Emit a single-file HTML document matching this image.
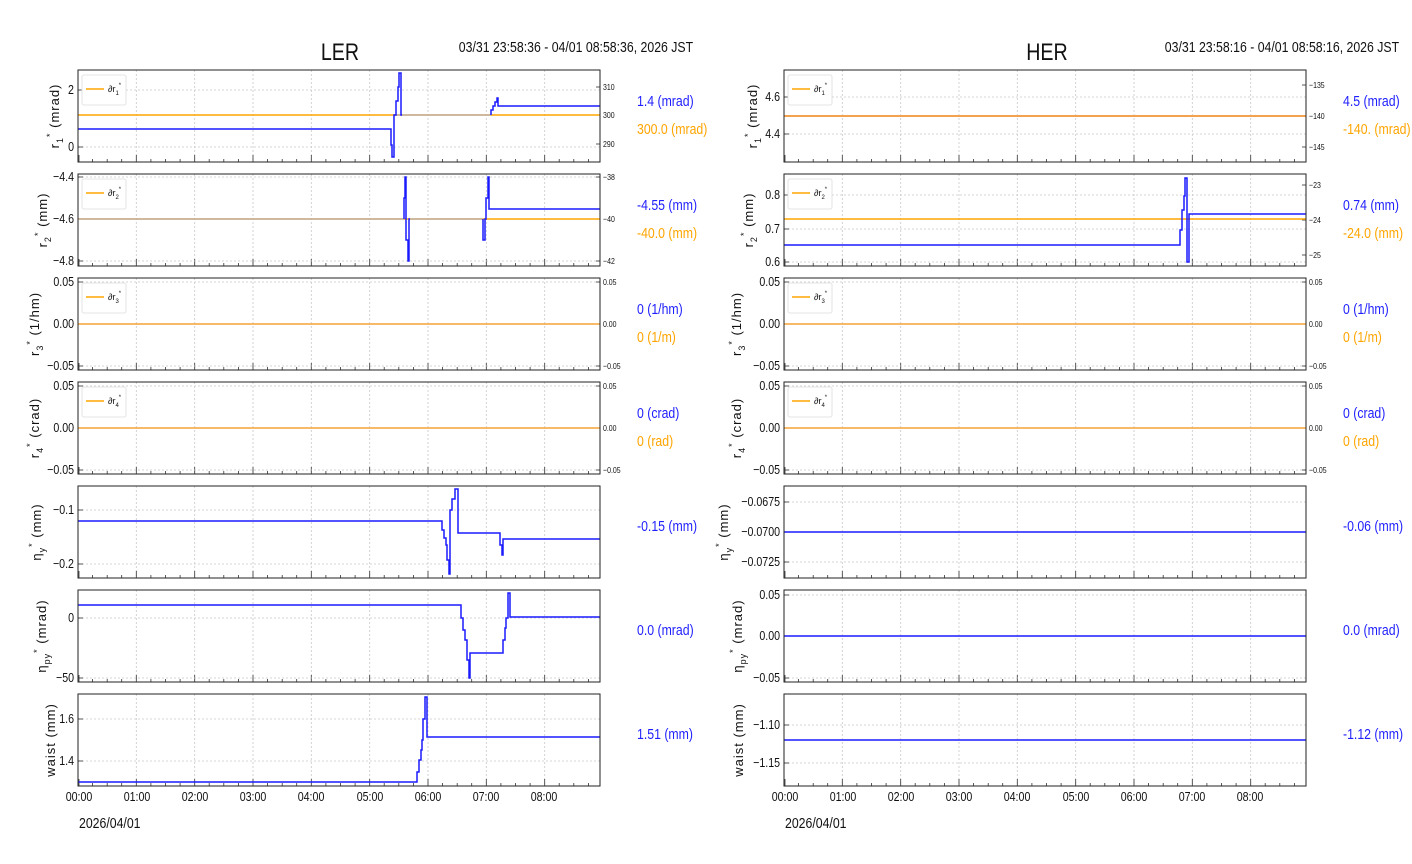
<!DOCTYPE html>
<html><head><meta charset="utf-8"><style>
html,body{margin:0;padding:0;background:#fff;width:1412px;height:864px;overflow:hidden}
svg{display:block}
text{font-family:"Liberation Sans",sans-serif;fill:#111}
.tk{font-size:13px}
.rtk{font-size:8.5px}
.yl{font-family:"DejaVu Sans","Liberation Sans",sans-serif;font-size:13px;letter-spacing:1px}
.vb{fill:#1f1fff;font-size:15px}
.vo{fill:#ffa500;font-size:15px}
.lg{font-size:9px;fill:#333}
.n text{transform:scaleX(.82);transform-box:fill-box;transform-origin:left center}
.ne text,text.ne{transform:scaleX(.82);transform-box:fill-box;transform-origin:right center}
.nm text,text.nm{transform:scaleX(.82);transform-box:fill-box;transform-origin:center center}
</style></head><body>
<svg width="1412" height="864" viewBox="0 0 1412 864" xmlns="http://www.w3.org/2000/svg">
<defs>
<g id="vg">
<path d="M58.3 0v92M116.7 0v92M175 0v92M233.3 0v92M291.7 0v92M350 0v92M408.3 0v92M466.7 0v92" stroke="#c8c8c8" stroke-width="0.8" stroke-dasharray="2,2" fill="none"/>
<path d="M14.6 92v-3M29.2 92v-3M43.7 92v-3M72.9 92v-3M87.5 92v-3M102.1 92v-3M131.2 92v-3M145.8 92v-3M160.4 92v-3M189.6 92v-3M204.2 92v-3M218.7 92v-3M247.9 92v-3M262.5 92v-3M277.1 92v-3M306.2 92v-3M320.8 92v-3M335.4 92v-3M364.6 92v-3M379.2 92v-3M393.7 92v-3M422.9 92v-3M437.5 92v-3M452.1 92v-3M481.2 92v-3M495.8 92v-3M510.4 92v-3M1 92v-7M58.3 92v-7M116.7 92v-7M175 92v-7M233.3 92v-7M291.7 92v-7M350 92v-7M408.3 92v-7M466.7 92v-7" stroke="#333" stroke-width="0.8" fill="none"/>
</g>
<g id="fr"><rect x="0" y="0" width="522" height="92" fill="none" stroke="#222" stroke-width="1"/></g>
</defs>

<text x="340" y="60" text-anchor="middle" class="nm" style="font-size:24px">LER</text>
<text x="693" y="52" text-anchor="end" class="ne" style="font-size:15px">03/31 23:58:36 - 04/01 08:58:36, 2026 JST</text>
<text x="1047" y="60" text-anchor="middle" class="nm" style="font-size:24px">HER</text>
<text x="1399" y="52" text-anchor="end" class="ne" style="font-size:15px">03/31 23:58:16 - 04/01 08:58:16, 2026 JST</text>

<g>
<use href="#vg" x="78" y="70"/><use href="#vg" x="78" y="174"/><use href="#vg" x="78" y="278"/><use href="#vg" x="78" y="382"/><use href="#vg" x="78" y="486"/><use href="#vg" x="78" y="590"/><use href="#vg" x="78" y="694"/>
<use href="#vg" x="784" y="70"/><use href="#vg" x="784" y="174"/><use href="#vg" x="784" y="278"/><use href="#vg" x="784" y="382"/><use href="#vg" x="784" y="486"/><use href="#vg" x="784" y="590"/><use href="#vg" x="784" y="694"/>
</g>

<g stroke="#c8c8c8" stroke-width="0.8" stroke-dasharray="2,2">
<path d="M78 90H600M78 147H600M78 177H600M78 219H600M78 261H600M78 282H600M78 366H600M78 386H600M78 470H600M78 510H600M78 564H600M78 618H600M78 678H600M78 719H600M78 761H600"/>
<path d="M784 97H1306M784 134H1306M784 195H1306M784 229H1306M784 262H1306M784 282H1306M784 324H1306M784 366H1306M784 386H1306M784 428H1306M784 470H1306M784 502H1306M784 532H1306M784 562H1306M784 595H1306M784 636H1306M784 678H1306M784 725H1306M784 763H1306"/>
</g>

<g stroke="#222" stroke-width="0.8">
<path d="M78 90h5M78 147h5M78 177h5M78 219h5M78 261h5M78 282h5M78 324h5M78 366h5M78 386h5M78 428h5M78 470h5M78 510h5M78 564h5M78 618h5M78 678h5M78 719h5M78 761h5"/>
<path d="M600 87h-4M600 115h-4M600 144h-4M600 177h-4M600 219h-4M600 261h-4M600 282h-4M600 324h-4M600 366h-4M600 386h-4M600 428h-4M600 470h-4"/>
<path d="M784 97h5M784 134h5M784 195h5M784 229h5M784 262h5M784 282h5M784 324h5M784 366h5M784 386h5M784 428h5M784 470h5M784 502h5M784 532h5M784 562h5M784 595h5M784 636h5M784 678h5M784 725h5M784 763h5"/>
<path d="M1306 85h-4M1306 116h-4M1306 147h-4M1306 185h-4M1306 220h-4M1306 255h-4M1306 282h-4M1306 324h-4M1306 366h-4M1306 386h-4M1306 428h-4M1306 470h-4"/>
</g>

<g fill="none" stroke-width="1.5">
<path d="M78 115H600" stroke="#ffa500"/>
<path d="M396 115H491" stroke="#bdb0a8"/>
<path d="M78 129H391V145H392V157H394V115H396V101H398V87H399V73H401V115H402M491 115V110H493V106H495V102H497V98H498V106H600" stroke="#1a1aff"/>

<path d="M78 219H600" stroke="#ffa500"/>
<path d="M78 219H404M410 219H483" stroke="#bdb0a8"/>
<path d="M404 219V198H405V177H406V240H408V261H409V219H410M483 219V240H485V219H486V198H488V177H489V209H600" stroke="#1a1aff"/>

<path d="M78 324H600" stroke="#e8a0a0"/>
<path d="M78 324H600" stroke="#ffa500" stroke-width="1"/>
<path d="M78 428H600" stroke="#e8a0a0"/>
<path d="M78 428H600" stroke="#ffa500" stroke-width="1"/>

<path d="M78 521H442V530H444V538H446V545H447V560H449V574H450V510H452V499H455V489H458V533H500V545H502V555H503V539H600" stroke="#1a1aff"/>
<path d="M78 605H461V618H463V630H465V640H467V660H469V678H470V653H503V640H505V628H506V618H508V593H510V617H600" stroke="#1a1aff"/>
<path d="M78 782H417V772H419V760H421V750H422V740H423V719H425V697H427V737H600" stroke="#1a1aff"/>

<path d="M784 116H1306" stroke="#e8a0a0" stroke-width="2"/>
<path d="M784 116H1306" stroke="#ffa500" stroke-width="1"/>
<path d="M784 219H1306" stroke="#ffa500"/>
<path d="M784 245H1180V230H1182V210H1184V196H1185V178H1187V262H1189V214H1306" stroke="#1a1aff"/>
<path d="M784 324H1306" stroke="#e8a0a0"/>
<path d="M784 324H1306" stroke="#ffa500" stroke-width="1"/>
<path d="M784 428H1306" stroke="#e8a0a0"/>
<path d="M784 428H1306" stroke="#ffa500" stroke-width="1"/>
<path d="M784 532H1306M784 636H1306M784 740H1306" stroke="#1a1aff"/>
</g>

<use href="#fr" x="78" y="70"/><use href="#fr" x="78" y="174"/><use href="#fr" x="78" y="278"/><use href="#fr" x="78" y="382"/><use href="#fr" x="78" y="486"/><use href="#fr" x="78" y="590"/><use href="#fr" x="78" y="694"/>
<use href="#fr" x="784" y="70"/><use href="#fr" x="784" y="174"/><use href="#fr" x="784" y="278"/><use href="#fr" x="784" y="382"/><use href="#fr" x="784" y="486"/><use href="#fr" x="784" y="590"/><use href="#fr" x="784" y="694"/>

<g fill="#fff" stroke="#ddd" stroke-width="0.8">
<rect x="82" y="75" width="44" height="30" rx="2"/><rect x="82" y="179" width="44" height="30" rx="2"/><rect x="82" y="283" width="44" height="30" rx="2"/><rect x="82" y="387" width="44" height="30" rx="2"/>
<rect x="788" y="75" width="44" height="30" rx="2"/><rect x="788" y="179" width="44" height="30" rx="2"/><rect x="788" y="283" width="44" height="30" rx="2"/><rect x="788" y="387" width="44" height="30" rx="2"/>
</g>
<g stroke="#ffa500" stroke-width="1.5">
<path d="M86 89h18M86 193h18M86 297h18M86 401h18M792 89h18M792 193h18M792 297h18M792 401h18"/>
</g>
<g class="lg">
<text x="108" y="92">∂r<tspan dy="3" font-size="6">1</tspan><tspan dy="-8" font-size="6">*</tspan></text>
<text x="108" y="196">∂r<tspan dy="3" font-size="6">2</tspan><tspan dy="-8" font-size="6">*</tspan></text>
<text x="108" y="300">∂r<tspan dy="3" font-size="6">3</tspan><tspan dy="-8" font-size="6">*</tspan></text>
<text x="108" y="404">∂r<tspan dy="3" font-size="6">4</tspan><tspan dy="-8" font-size="6">*</tspan></text>
<text x="814" y="92">∂r<tspan dy="3" font-size="6">1</tspan><tspan dy="-8" font-size="6">*</tspan></text>
<text x="814" y="196">∂r<tspan dy="3" font-size="6">2</tspan><tspan dy="-8" font-size="6">*</tspan></text>
<text x="814" y="300">∂r<tspan dy="3" font-size="6">3</tspan><tspan dy="-8" font-size="6">*</tspan></text>
<text x="814" y="404">∂r<tspan dy="3" font-size="6">4</tspan><tspan dy="-8" font-size="6">*</tspan></text>
</g>

<g class="tk ne" text-anchor="end">
<text x="74" y="94">2</text><text x="74" y="151">0</text>
<text x="74" y="181">−4.4</text><text x="74" y="223">−4.6</text><text x="74" y="265">−4.8</text>
<text x="74" y="286">0.05</text><text x="74" y="328">0.00</text><text x="74" y="370">−0.05</text>
<text x="74" y="390">0.05</text><text x="74" y="432">0.00</text><text x="74" y="474">−0.05</text>
<text x="74" y="514">−0.1</text><text x="74" y="568">−0.2</text>
<text x="74" y="622">0</text><text x="74" y="682">−50</text>
<text x="74" y="723">1.6</text><text x="74" y="765">1.4</text>
<text x="780" y="101">4.6</text><text x="780" y="138">4.4</text>
<text x="780" y="199">0.8</text><text x="780" y="233">0.7</text><text x="780" y="266">0.6</text>
<text x="780" y="286">0.05</text><text x="780" y="328">0.00</text><text x="780" y="370">−0.05</text>
<text x="780" y="390">0.05</text><text x="780" y="432">0.00</text><text x="780" y="474">−0.05</text>
<text x="780" y="506">−0.0675</text><text x="780" y="536">−0.0700</text><text x="780" y="566">−0.0725</text>
<text x="780" y="599">0.05</text><text x="780" y="640">0.00</text><text x="780" y="682">−0.05</text>
<text x="780" y="729">−1.10</text><text x="780" y="767">−1.15</text>
</g>
<g class="rtk n">
<text x="603" y="90">310</text><text x="603" y="118">300</text><text x="603" y="147">290</text>
<text x="603" y="180">−38</text><text x="603" y="222">−40</text><text x="603" y="264">−42</text>
<text x="603" y="285">0.05</text><text x="603" y="327">0.00</text><text x="603" y="369">−0.05</text>
<text x="603" y="389">0.05</text><text x="603" y="431">0.00</text><text x="603" y="473">−0.05</text>
<text x="1309" y="88">−135</text><text x="1309" y="119">−140</text><text x="1309" y="150">−145</text>
<text x="1309" y="188">−23</text><text x="1309" y="223">−24</text><text x="1309" y="258">−25</text>
<text x="1309" y="285">0.05</text><text x="1309" y="327">0.00</text><text x="1309" y="369">−0.05</text>
<text x="1309" y="389">0.05</text><text x="1309" y="431">0.00</text><text x="1309" y="473">−0.05</text>
</g>

<g class="tk nm" text-anchor="middle">
<text x="79" y="801">00:00</text><text x="137" y="801">01:00</text><text x="195" y="801">02:00</text><text x="253" y="801">03:00</text><text x="311" y="801">04:00</text><text x="370" y="801">05:00</text><text x="428" y="801">06:00</text><text x="486" y="801">07:00</text><text x="544" y="801">08:00</text>
<text x="785" y="801">00:00</text><text x="843" y="801">01:00</text><text x="901" y="801">02:00</text><text x="959" y="801">03:00</text><text x="1017" y="801">04:00</text><text x="1076" y="801">05:00</text><text x="1134" y="801">06:00</text><text x="1192" y="801">07:00</text><text x="1250" y="801">08:00</text>
</g>
<g class="n" style="font-size:15px">
<text x="79" y="828">2026/04/01</text>
<text x="785" y="828">2026/04/01</text>
</g>

<g class="yl" text-anchor="middle">
<text transform="translate(59,116) rotate(-90)">r<tspan dy="4" font-size="9">1</tspan><tspan dy="-10" font-size="9">*</tspan><tspan dy="6"> (mrad)</tspan></text>
<text transform="translate(47,220) rotate(-90)">r<tspan dy="4" font-size="9">2</tspan><tspan dy="-10" font-size="9">*</tspan><tspan dy="6"> (mm)</tspan></text>
<text transform="translate(39,324) rotate(-90)">r<tspan dy="4" font-size="9">3</tspan><tspan dy="-10" font-size="9">*</tspan><tspan dy="6"> (1/hm)</tspan></text>
<text transform="translate(39,428) rotate(-90)">r<tspan dy="4" font-size="9">4</tspan><tspan dy="-10" font-size="9">*</tspan><tspan dy="6"> (crad)</tspan></text>
<text transform="translate(41,532) rotate(-90)">η<tspan dy="4" font-size="9">y</tspan><tspan dy="-10" font-size="9">*</tspan><tspan dy="6"> (mm)</tspan></text>
<text transform="translate(46,636) rotate(-90)">η<tspan dy="4" font-size="9">py</tspan><tspan dy="-10" font-size="9">*</tspan><tspan dy="6"> (mrad)</tspan></text>
<text transform="translate(55,740) rotate(-90)">waist (mm)</text>
<text transform="translate(757,116) rotate(-90)">r<tspan dy="4" font-size="9">1</tspan><tspan dy="-10" font-size="9">*</tspan><tspan dy="6"> (mrad)</tspan></text>
<text transform="translate(753,220) rotate(-90)">r<tspan dy="4" font-size="9">2</tspan><tspan dy="-10" font-size="9">*</tspan><tspan dy="6"> (mm)</tspan></text>
<text transform="translate(741,324) rotate(-90)">r<tspan dy="4" font-size="9">3</tspan><tspan dy="-10" font-size="9">*</tspan><tspan dy="6"> (1/hm)</tspan></text>
<text transform="translate(741,428) rotate(-90)">r<tspan dy="4" font-size="9">4</tspan><tspan dy="-10" font-size="9">*</tspan><tspan dy="6"> (crad)</tspan></text>
<text transform="translate(728,532) rotate(-90)">η<tspan dy="4" font-size="9">y</tspan><tspan dy="-10" font-size="9">*</tspan><tspan dy="6"> (mm)</tspan></text>
<text transform="translate(742,636) rotate(-90)">η<tspan dy="4" font-size="9">py</tspan><tspan dy="-10" font-size="9">*</tspan><tspan dy="6"> (mrad)</tspan></text>
<text transform="translate(743,740) rotate(-90)">waist (mm)</text>
</g>

<g class="n">
<text class="vb" x="637" y="106">1.4 (mrad)</text><text class="vo" x="637" y="134">300.0 (mrad)</text>
<text class="vb" x="637" y="210">-4.55 (mm)</text><text class="vo" x="637" y="238">-40.0 (mm)</text>
<text class="vb" x="637" y="314">0 (1/hm)</text><text class="vo" x="637" y="342">0 (1/m)</text>
<text class="vb" x="637" y="418">0 (crad)</text><text class="vo" x="637" y="446">0 (rad)</text>
<text class="vb" x="637" y="531">-0.15 (mm)</text>
<text class="vb" x="637" y="635">0.0 (mrad)</text>
<text class="vb" x="637" y="739">1.51 (mm)</text>
<text class="vb" x="1343" y="106">4.5 (mrad)</text><text class="vo" x="1343" y="134">-140. (mrad)</text>
<text class="vb" x="1343" y="210">0.74 (mm)</text><text class="vo" x="1343" y="238">-24.0 (mm)</text>
<text class="vb" x="1343" y="314">0 (1/hm)</text><text class="vo" x="1343" y="342">0 (1/m)</text>
<text class="vb" x="1343" y="418">0 (crad)</text><text class="vo" x="1343" y="446">0 (rad)</text>
<text class="vb" x="1343" y="531">-0.06 (mm)</text>
<text class="vb" x="1343" y="635">0.0 (mrad)</text>
<text class="vb" x="1343" y="739">-1.12 (mm)</text>
</g>
</svg>
</body></html>
